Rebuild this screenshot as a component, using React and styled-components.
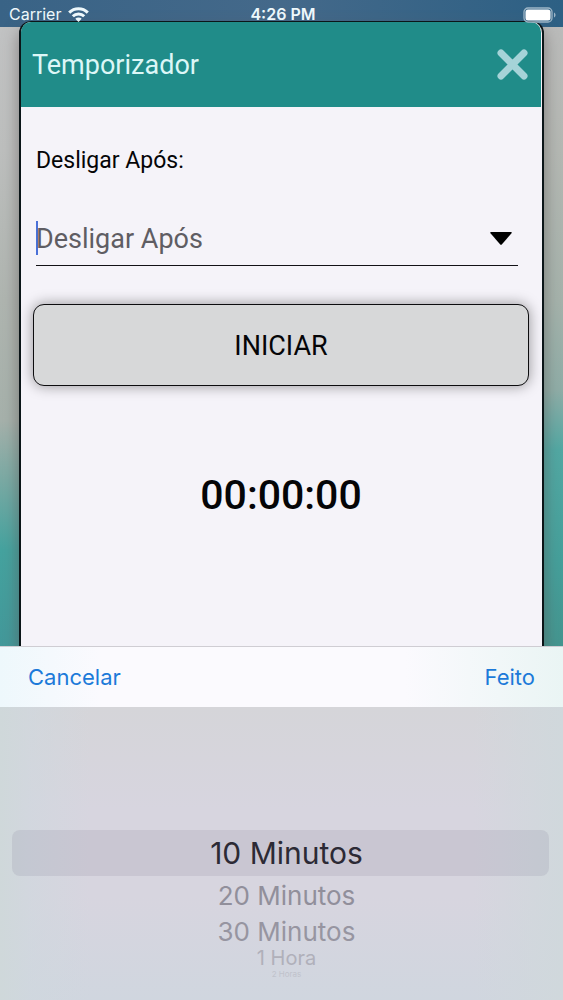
import React, { useState } from "react";
import styled, { createGlobalStyle } from "styled-components";

const colors = {
  teal: "#208c89",
  text: "#050507",
  hint: "#5f5d63",
  link: "#1c7ad9",
  caret: "#4a70d8",
};

const GlobalStyle = createGlobalStyle`
  * {
    box-sizing: border-box;
  }

  body {
    margin: 0;
    font-family: Roboto, "Liberation Sans", sans-serif;
    color: ${colors.text};
  }

  button,
  input {
    font-family: inherit;
    color: inherit;
    margin: 0;
    padding: 0;
    border: none;
    background: none;
  }

  button {
    cursor: pointer;
  }
`;

const Screen = styled.div`
  display: flex;
  flex-direction: column;
  min-height: 100vh;
  overflow: hidden;
  background:
    linear-gradient(
      180deg,
      #c2c3c4 0,
      #bdbfbe 150px,
      #afb5b0 300px,
      #a6b1ab 420px,
      #7aaaa4 480px,
      #45a39f 550px,
      #43989a 650px
    ) left / 50% 100% no-repeat,
    linear-gradient(
      180deg,
      #bcbcbc 0,
      #b4b8b3 150px,
      #a5b2ab 300px,
      #8fada7 390px,
      #52a8a3 450px,
      #45a09b 560px,
      #44958f 650px
    ) right / 50% 100% no-repeat;
`;

const StatusBar = styled.header`
  display: grid;
  grid-template-columns: 1fr auto 1fr;
  align-items: center;
  height: 27px;
  padding: 2px 6px 0 9px;
  background: linear-gradient(90deg, #396386, #44698a 50%, #2d6084);
  color: #eef8fb;
  font-family: Inter, "Liberation Sans", sans-serif;
  font-size: 16px;
  line-height: 25px;

  > * {
    z-index: 1;
  }
`;

const Carrier = styled.div`
  display: flex;
  align-items: center;
  gap: 7px;
`;

const Clock = styled.time`
  font-weight: 600;
`;

const BatteryIcon = styled.svg`
  justify-self: end;
`;

const Modal = styled.main`
  flex: 1;
  margin: -6px 19px 0;
  border: solid #0b1518;
  border-width: 1px 2px 0;
  border-radius: 12px 12px 0 0;
  background: #f5f3f9;
  box-shadow: 0 8px 16px rgba(90, 80, 80, 0.6);
`;

const ModalHeader = styled.div`
  display: flex;
  align-items: center;
  justify-content: space-between;
  height: 85px;
  margin-right: 1px;
  padding: 0 12px 0 11px;
  border-radius: 10px 10px 0 0;
  background: ${colors.teal};
`;

const Title = styled.h1`
  margin: 0;
  font-size: 27px;
  font-weight: 400;
  line-height: 32px;
  color: #dcf7f7;
`;

const CloseButton = styled.button`
  display: flex;
  color: #a5d3d8;
`;

const ModalBody = styled.form`
  display: flex;
  flex-direction: column;
  padding: 38px 13px 0 12px;
`;

const FieldLabel = styled.label`
  padding: 0 3px;
  font-size: 23px;
  line-height: 32px;
`;

const Field = styled.div`
  display: flex;
  align-items: center;
  height: 58px;
  margin: 31px 11px 0 3px;
  padding: 5px 6px 2px 0;
  border-bottom: 1px solid #121116;
`;

const Caret = styled.span`
  width: 2px;
  height: 34px;
  margin-right: -2px;
  background: ${colors.caret};
`;

const FieldInput = styled.input`
  flex: 1;
  min-width: 0;
  height: 40px;
  padding-top: 1px;
  font-size: 27px;
  outline: none;

  &::placeholder {
    color: ${colors.hint};
    opacity: 1;
  }
`;

const ArrowButton = styled.button`
  display: flex;
`;

const StartButton = styled.button`
  height: 82px;
  margin-top: 38px;
  padding-top: 2px;
  border: 1px solid #0d0d0f;
  border-radius: 11px;
  background: #d7d8d9;
  box-shadow: 0 0 14px rgba(0, 0, 0, 0.4);
  font-size: 27px;
`;

const Countdown = styled.output`
  display: block;
  margin: 84px 0 70px;
  text-align: center;
  font-size: 41px;
  font-weight: 500;
  line-height: 50px;
`;

const Sheet = styled.section`
  position: relative;
  font-family: Inter, "Liberation Sans", sans-serif;
`;

const Toolbar = styled.div`
  display: flex;
  align-items: center;
  justify-content: space-between;
  height: 61px;
  padding: 0 28px;
  border-top: 1px solid #cfcdd3;
  background: linear-gradient(90deg, #eef8fc, #fbfafe 18%, #fbfafe 72%, #eaf5f4);
`;

const ToolbarButton = styled.button`
  font-size: 22px;
  line-height: 32px;
  color: ${colors.link};
`;

const Wheel = styled.ul`
  margin: 0;
  padding: 123px 14px 20px 12px;
  list-style: none;
  background:
    linear-gradient(90deg, #cfd8da 0, rgba(207, 216, 222, 0.6) 30px, transparent 90px),
    linear-gradient(270deg, #d0d8dc 0, transparent 90px),
    linear-gradient(180deg, #d5d5d9, #d7d5df 35%, #d7d5df 65%, #d0d6df);
`;

const WheelRow = styled.li`
  display: flex;
  align-items: center;
  justify-content: center;
  height: ${(props) => props.$height}px;
  padding-left: 12px;
  border-radius: 8px;
  background: ${(props) => (props.$selected ? "rgba(120, 115, 140, 0.15)" : "none")};
`;

const WheelOption = styled.button`
  font-size: ${(props) => props.$size}px;
  line-height: 1;
  color: ${(props) => props.$color};
`;

// The rows get smaller and paler as the wheel turns away
const options = [
  { label: "10 Minutos", height: 46, size: 30, color: "#2c2a35" },
  { label: "20 Minutos", height: 40, size: 26, color: "#918f9b" },
  { label: "30 Minutos", height: 32, size: 26, color: "#9795a1" },
  { label: "1 Hora", height: 20, size: 20, color: "#b0b0ba" },
  { label: "2 Horas", height: 12, size: 8, color: "#c0c2cb" },
];

function WifiIcon() {
  return (
    <svg width="21" height="15" viewBox="0 0 21 15" fill="none" stroke="currentColor" strokeWidth="3" aria-hidden="true">
      <path d="M1.2 5.6a13.2 13.2 0 0 1 18.6 0" />
      <path d="M4.8 9.3a8 8 0 0 1 11.4 0" />
      <path d="M10.5 15 7.3 11.7a4.6 4.6 0 0 1 6.4 0z" fill="currentColor" stroke="none" />
    </svg>
  );
}

function App() {
  const [selected, setSelected] = useState("10 Minutos");
  const [value, setValue] = useState("");

  return (
    <>
      <GlobalStyle />
      <Screen>
        <StatusBar>
          <Carrier>
            Carrier
            <WifiIcon />
          </Carrier>
          <Clock>4:26 PM</Clock>
          <BatteryIcon width="34" height="16" viewBox="0 0 34 16" aria-hidden="true">
            <rect x="1" y="1" width="28" height="14" rx="4" fill="none" stroke="#9db5c6" strokeWidth="1.3" />
            <rect x="2.5" y="2.5" width="25" height="11" rx="2.5" fill="#fff" />
            <path d="M31 5.5c2 .8 2 4.2 0 5z" fill="#9db5c6" />
          </BatteryIcon>
        </StatusBar>

        <Modal>
          <ModalHeader>
            <Title>Temporizador</Title>
            <CloseButton type="button" aria-label="Fechar">
              <svg width="32" height="32" viewBox="0 0 32 32" stroke="currentColor" strokeWidth="7" strokeLinecap="round">
                <path d="M4 4l23 23M27 4l-23 23" />
              </svg>
            </CloseButton>
          </ModalHeader>

          <ModalBody onSubmit={(e) => e.preventDefault()}>
            <FieldLabel htmlFor="timer">Desligar Após:</FieldLabel>
            <Field>
              <Caret />
              <FieldInput id="timer" placeholder="Desligar Após" value={value} readOnly />
              <ArrowButton type="button" aria-label="Abrir opções">
                <svg width="22" height="13" viewBox="0 0 22 13">
                  <path d="M1 0h20q1.5 0 .5 1.3L12 12.3q-1 1-2 0L.5 1.3Q-.5 0 1 0z" />
                </svg>
              </ArrowButton>
            </Field>
            <StartButton type="submit">INICIAR</StartButton>
            <Countdown>00:00:00</Countdown>
          </ModalBody>
        </Modal>

        <Sheet>
          <Toolbar>
            <ToolbarButton type="button" onClick={() => setValue("")}>Cancelar</ToolbarButton>
            <ToolbarButton type="button" onClick={() => setValue(selected)}>Feito</ToolbarButton>
          </Toolbar>
          <Wheel>
            {options.map((option) => (
              <WheelRow key={option.label} $height={option.height} $selected={option.label === selected}>
                <WheelOption
                  type="button"
                  $size={option.size}
                  $color={option.color}
                  onClick={() => setSelected(option.label)}
                >
                  {option.label}
                </WheelOption>
              </WheelRow>
            ))}
          </Wheel>
        </Sheet>
      </Screen>
    </>
  );
}

export default App;
